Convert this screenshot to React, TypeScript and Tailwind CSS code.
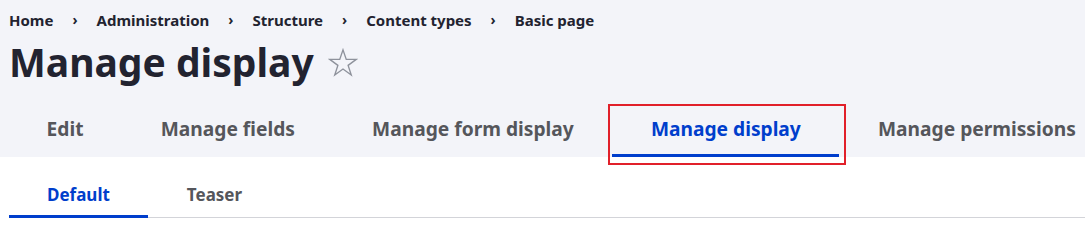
import React from 'react';

const crumbs = ['Home', 'Administration', 'Structure', 'Content types', 'Basic page'];

const primaryTabs = [
    { label: 'Edit', active: false },
    { label: 'Manage fields', active: false },
    { label: 'Manage form display', active: false },
    { label: 'Manage display', active: true },
    { label: 'Manage permissions', active: false },
];

const Star = () => (
    <svg width="30" height="30" viewBox="0 0 24 24" fill="none" stroke="#8e929c" strokeWidth="1.1" strokeLinejoin="miter">
        <path d="M12 1.5l2.6 7.6h8l-6.5 4.8 2.5 7.7L12 16.8l-6.6 4.8 2.5-7.7L1.4 9.1h8z" />
    </svg>
);

export default function App() {
    return (
        <div className="w-[1085px] h-[232px] bg-white overflow-hidden" style={{ fontFamily: '"Noto Sans", sans-serif' }}>
            <div className="bg-[#f3f4f9] pl-[9px] pt-[9px]">
                <ol className="flex items-center text-[15px] font-bold text-[#222330] leading-[22px]">
                    {crumbs.map((c, i) => (
                        <li key={c} className="flex items-center">
                            {i > 0 && <span className="mx-[19px] text-[14px]">›</span>}
                            <span>{c}</span>
                        </li>
                    ))}
                </ol>
                <div className="flex items-center mt-[7px] h-[48px]">
                    <h1 className="text-[39px] font-bold text-[#222330] leading-[48px]">Manage display</h1>
                    <span className="ml-[14px] mt-[2px]"><Star /></span>
                </div>
                <ul className="flex mt-[19px] -ml-px">
                    {primaryTabs.map((t) => (
                        <li key={t.label} className="relative shrink-0">
                            <a className={`block whitespace-nowrap px-[38.6px] pt-[12px] pb-[16px] text-[19.2px] font-bold leading-[24px] ${t.active ? 'text-[#003ecc]' : 'text-[#55565b]'}`}>
                                {t.label}
                            </a>
                            {t.active && (
                                <>
                                    <span className="absolute left-0 right-0 bottom-0 h-[3px] bg-[#003ecc]" />
                                    <span className="absolute -left-[4px] -right-[7px] -top-[1px] -bottom-[8px] border-2 border-[#e1202a]" />
                                </>
                            )}
                        </li>
                    ))}
                </ul>
            </div>
            <div className="pl-[9px] pt-[26px]">
                <ul className="flex border-b border-[#d3d4d9]">
                    <li className="relative shrink-0">
                        <a className="block whitespace-nowrap px-[38px] pb-[10px] text-[17px] font-bold leading-[24px] text-[#003ecc]">Default</a>
                        <span className="absolute left-0 right-0 -bottom-px h-[3px] bg-[#003ecc]" />
                    </li>
                    <li className="shrink-0">
                        <a className="block whitespace-nowrap px-[39px] pb-[10px] text-[17px] font-bold leading-[24px] text-[#55565b]">Teaser</a>
                    </li>
                </ul>
            </div>
        </div>
    );
}
